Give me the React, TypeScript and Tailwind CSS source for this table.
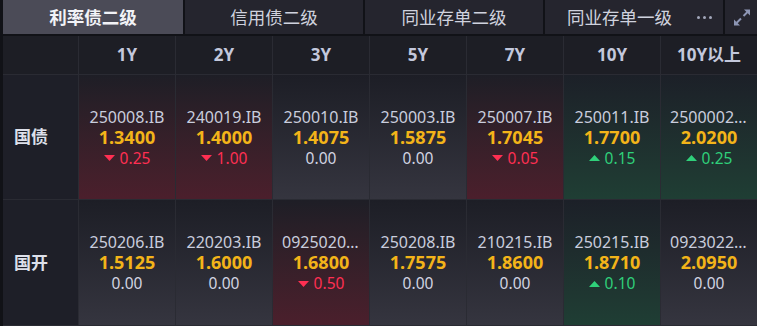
import React from "react";

type Cell = { code: string; value: string; change: string; dir: "up" | "down" | "flat" };

const cols = ["1Y", "2Y", "3Y", "5Y", "7Y", "10Y", "10Y以上"];

const rows: { label: string; cells: Cell[] }[] = [
  {
    label: "国债",
    cells: [
      { code: "250008.IB", value: "1.3400", change: "0.25", dir: "down" },
      { code: "240019.IB", value: "1.4000", change: "1.00", dir: "down" },
      { code: "250010.IB", value: "1.4075", change: "0.00", dir: "flat" },
      { code: "250003.IB", value: "1.5875", change: "0.00", dir: "flat" },
      { code: "250007.IB", value: "1.7045", change: "0.05", dir: "down" },
      { code: "250011.IB", value: "1.7700", change: "0.15", dir: "up" },
      { code: "250000201.IB", value: "2.0200", change: "0.25", dir: "up" },
    ],
  },
  {
    label: "国开",
    cells: [
      { code: "250206.IB", value: "1.5125", change: "0.00", dir: "flat" },
      { code: "220203.IB", value: "1.6000", change: "0.00", dir: "flat" },
      { code: "092502001.IB", value: "1.6800", change: "0.50", dir: "down" },
      { code: "250208.IB", value: "1.7575", change: "0.00", dir: "flat" },
      { code: "210215.IB", value: "1.8600", change: "0.00", dir: "flat" },
      { code: "250215.IB", value: "1.8710", change: "0.10", dir: "up" },
      { code: "092302201.IB", value: "2.0950", change: "0.00", dir: "flat" },
    ],
  },
];

const font = { fontFamily: '"Noto Sans", "Noto Sans CJK SC", sans-serif' };

function DataCell({ c }: { c: Cell }) {
  const bg =
    c.dir === "down"
      ? "bg-gradient-to-b from-[#1e1e26] to-[#4b1f2c]"
      : c.dir === "up"
      ? "bg-gradient-to-b from-[#1c2028] to-[#1f3e34]"
      : "bg-gradient-to-b from-[#1d1e26] to-[#35353f]";
  return (
    <div className={`${bg} flex flex-col items-center justify-center px-[9px] min-w-0`}>
      <div className="w-full truncate text-center text-[16px] leading-[20px] text-[#c9cddd]">{c.code}</div>
      <div className="text-[18px] leading-[21px] font-bold text-[#f3b419]">{c.value}</div>
      <div
        className={`flex items-center gap-[5px] text-[15.5px] leading-[20px] ${
          c.dir === "down" ? "text-[#ff2f52]" : c.dir === "up" ? "text-[#2fd07a]" : "text-[#d2d5e2]"
        }`}
      >
        {c.dir === "down" && (
          <svg width="11" height="6" viewBox="0 0 11 6" className="mt-[1px]">
            <polygon points="0,0 11,0 5.5,6" fill="#ff2f52" />
          </svg>
        )}
        {c.dir === "up" && (
          <svg width="11" height="6" viewBox="0 0 11 6" className="mt-[1px]">
            <polygon points="0,6 11,6 5.5,0" fill="#2fd07a" />
          </svg>
        )}
        <span>{c.change}</span>
      </div>
    </div>
  );
}

export default function App() {
  return (
    <div className="w-[757px] h-[326px] bg-[#111217] pl-[3px] flex flex-col overflow-hidden" style={font}>
      <div className="h-[34px] flex gap-[2px] shrink-0">
        <div className="w-[180px] bg-[#4b4b57] flex items-center justify-center text-[17.5px] font-bold text-[#f2f3f7]">
          利率债二级
        </div>
        <div className="w-[178px] bg-[#25252e] flex items-center justify-center text-[17.5px] text-[#cfd2de]">
          信用债二级
        </div>
        <div className="w-[178px] bg-[#25252e] flex items-center justify-center text-[17.5px] text-[#cfd2de]">
          同业存单二级
        </div>
        <div className="w-[178px] bg-[#25252e] flex items-center text-[17.5px] text-[#cfd2de] pl-[22px]">
          <span>同业存单一级</span>
          <span className="ml-[25px] flex gap-[3px] items-center">
            <span className="w-[3px] h-[3px] rounded-full bg-[#a2a7ba]" />
            <span className="w-[3px] h-[3px] rounded-full bg-[#a2a7ba]" />
            <span className="w-[3px] h-[3px] rounded-full bg-[#a2a7ba]" />
          </span>
        </div>
        <div className="w-[32px] bg-[#25252e] flex items-center justify-center">
          <svg width="18" height="17" viewBox="0 0 18 17" className="ml-[1px]">
            <line x1="10.5" y1="7" x2="15" y2="2.5" stroke="#8d96b4" strokeWidth="2" />
            <polygon points="17,0.5 17,6.5 11,0.5" fill="#8d96b4" />
            <line x1="8" y1="9.5" x2="3.5" y2="14" stroke="#8d96b4" strokeWidth="2" />
            <polygon points="1,16.5 1,10.5 7,16.5" fill="#8d96b4" />
          </svg>
        </div>
      </div>
      <div className="mt-[2px] grid grid-cols-[75px_repeat(7,96px)] grid-rows-[38px_124px_125px] gap-px bg-[#2a2b33] pb-px">
        <div className="bg-[#1d1e25]" />
        {cols.map((c) => (
          <div key={c} className="bg-[#1d1e25] flex items-center justify-center text-[17px] font-bold text-[#c3c8dc]">
            {c}
          </div>
        ))}
        {rows.map((r) => (
          <React.Fragment key={r.label}>
            <div className="bg-[#1e1f28] flex items-center pl-[11px] text-[17px] font-bold text-[#dde0ea]">
              {r.label}
            </div>
            {r.cells.map((c, i) => (
              <DataCell key={i} c={c} />
            ))}
          </React.Fragment>
        ))}
      </div>
    </div>
  );
}
